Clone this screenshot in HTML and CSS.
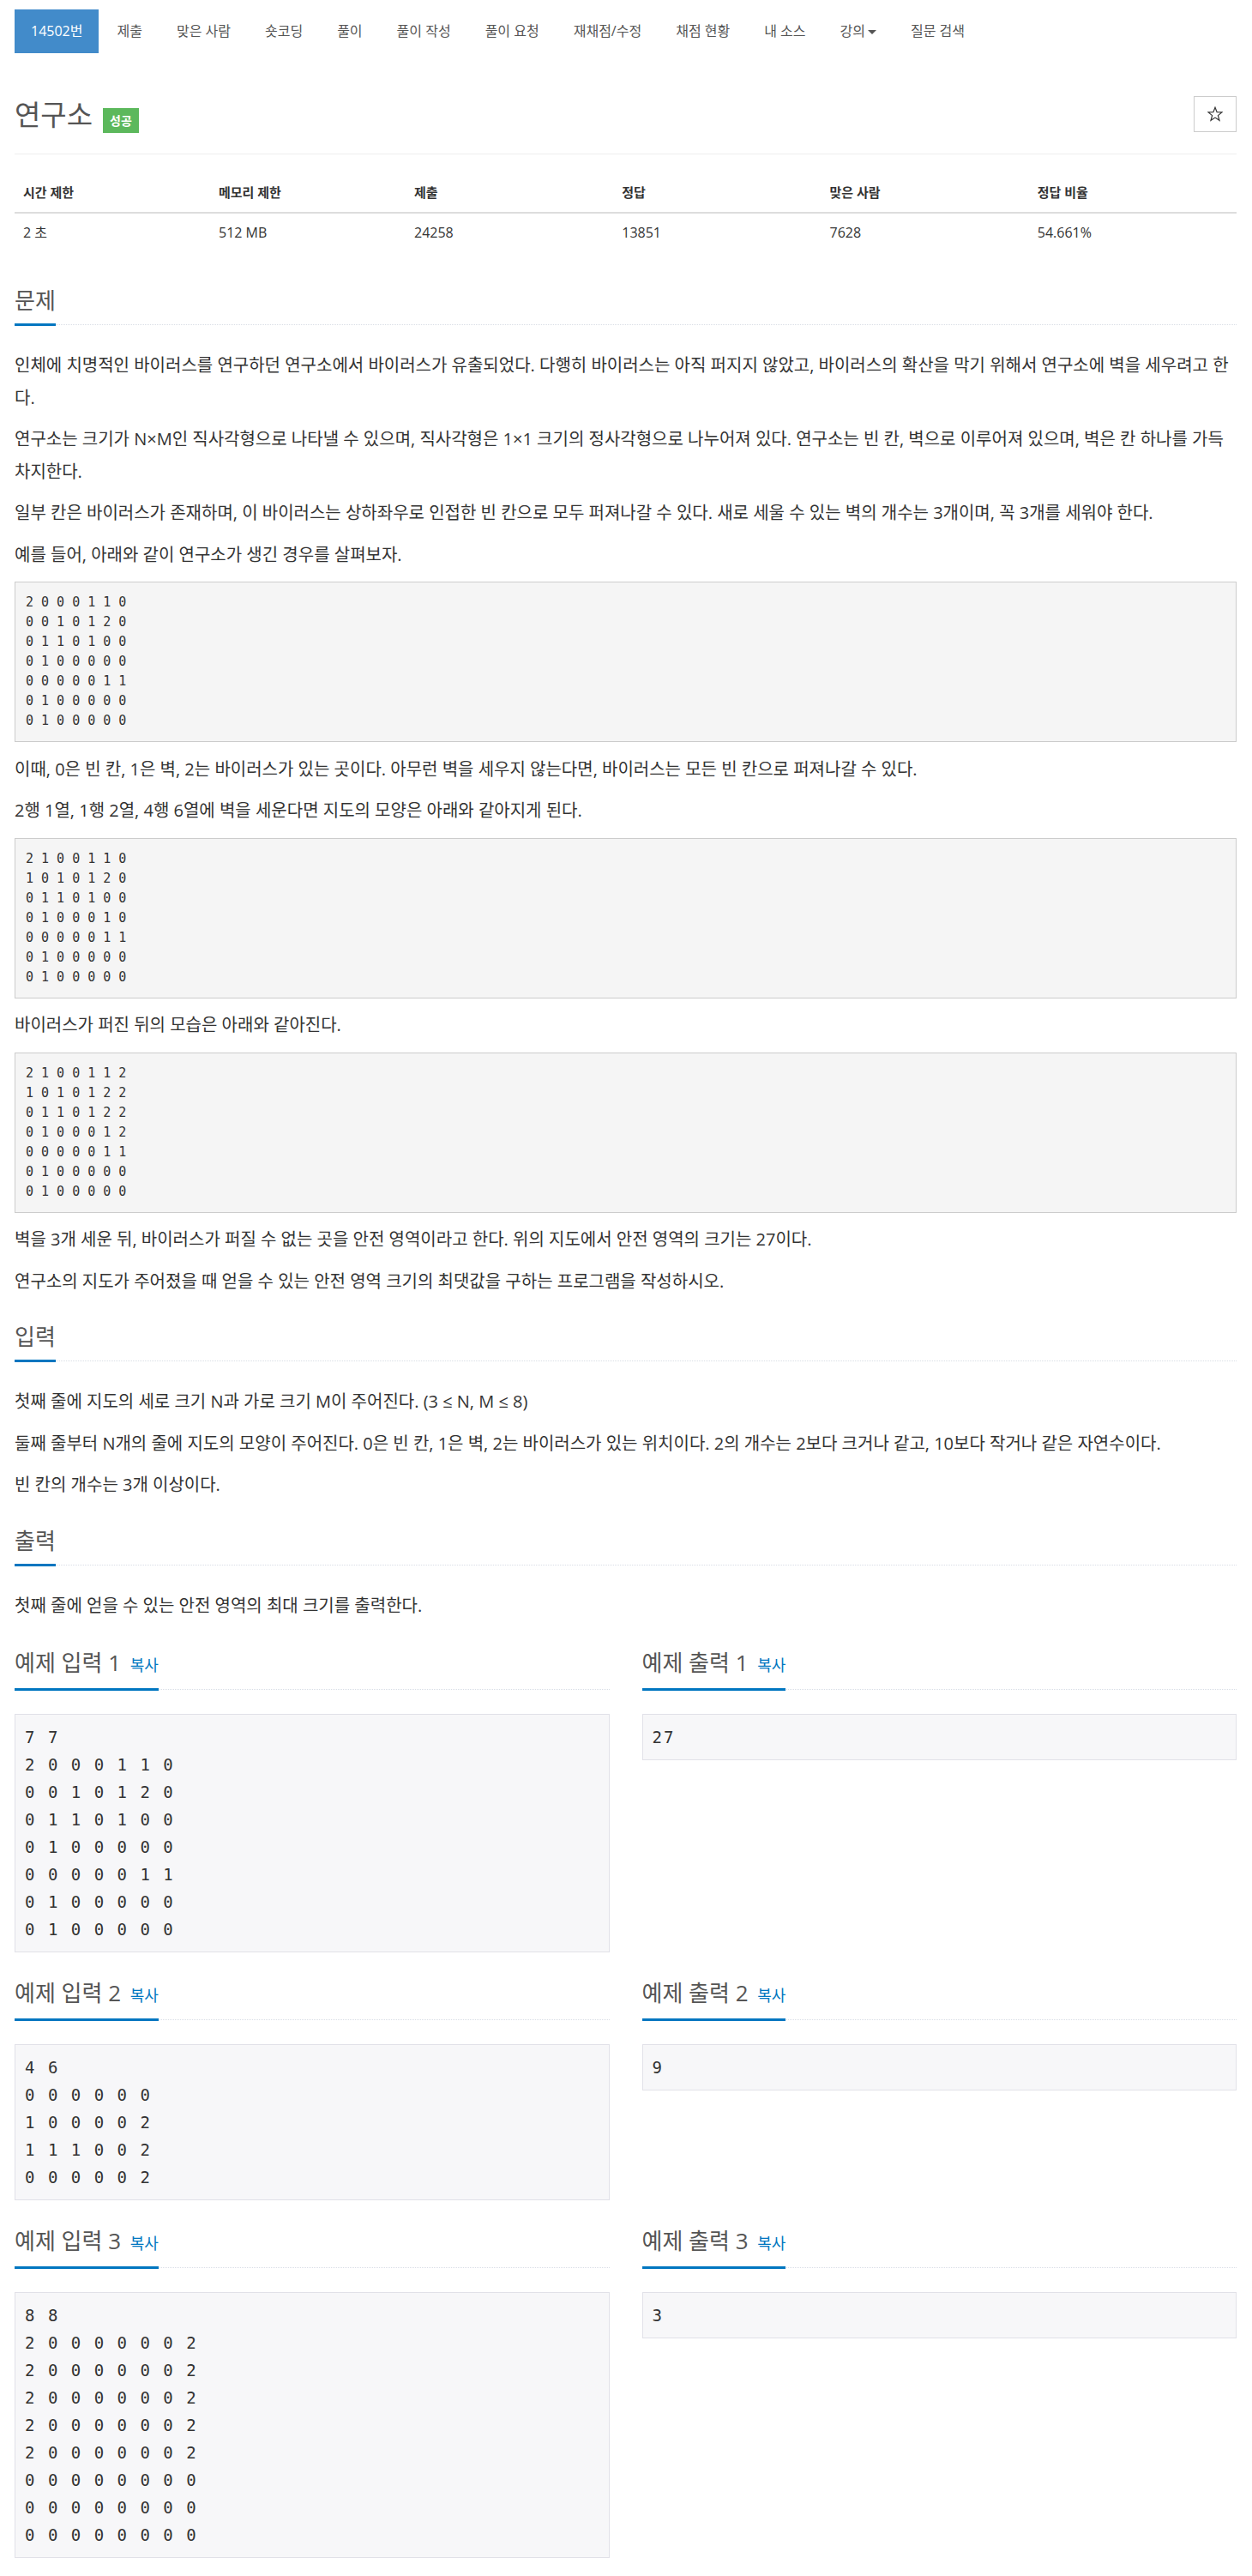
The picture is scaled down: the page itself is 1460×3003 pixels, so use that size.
FILE: index.html
```html
<!DOCTYPE html>
<html lang="ko">
<head>
<meta charset="utf-8">
<title>14502번: 연구소</title>
<link rel="stylesheet" href="styles.css">
</head>
<body>
<div class="container">
  <ul class="nav">
    <li class="active"><a>14502번</a></li>
    <li><a>제출</a></li>
    <li><a>맞은 사람</a></li>
    <li><a>숏코딩</a></li>
    <li><a>풀이</a></li>
    <li><a>풀이 작성</a></li>
    <li><a>풀이 요청</a></li>
    <li><a>재채점/수정</a></li>
    <li><a>채점 현황</a></li>
    <li><a>내 소스</a></li>
    <li><a>강의<span class="caret"></span></a></li>
    <li><a>질문 검색</a></li>
  </ul>

  <div class="page-header">
    <h1 class="title">연구소<span class="label">성공</span></h1>
    <button class="star-btn" type="button" aria-label="즐겨찾기">
      <svg width="18" height="18" viewBox="0 0 18 18"><polygon points="9,1.2 11.1,6.6 17,6.9 12.4,10.6 14,16.3 9,13.1 4,16.3 5.6,10.6 1,6.9 6.9,6.6" fill="none" stroke="#333" stroke-width="1.2" stroke-linejoin="miter"/></svg>
    </button>
  </div>

  <table class="info">
    <thead>
      <tr><th class="w16">시간 제한</th><th class="w16">메모리 제한</th><th class="w17">제출</th><th class="w17">정답</th><th class="w17">맞은 사람</th><th class="w17">정답 비율</th></tr>
    </thead>
    <tbody>
      <tr><td>2 초</td><td>512 MB</td><td>24258</td><td>13851</td><td>7628</td><td>54.661%</td></tr>
    </tbody>
  </table>

  <section class="section">
    <div class="headline"><h2>문제</h2></div>
    <div class="text">
      <p>인체에 치명적인 바이러스를 연구하던 연구소에서 바이러스가 유출되었다. 다행히 바이러스는 아직 퍼지지 않았고, 바이러스의 확산을 막기 위해서 연구소에 벽을 세우려고 한다.</p>
      <p>연구소는 크기가 N×M인 직사각형으로 나타낼 수 있으며, 직사각형은 1×1 크기의 정사각형으로 나누어져 있다. 연구소는 빈 칸, 벽으로 이루어져 있으며, 벽은 칸 하나를 가득<br>차지한다.</p>
      <p>일부 칸은 바이러스가 존재하며, 이 바이러스는 상하좌우로 인접한 빈 칸으로 모두 퍼져나갈 수 있다. 새로 세울 수 있는 벽의 개수는 3개이며, 꼭 3개를 세워야 한다.</p>
      <p>예를 들어, 아래와 같이 연구소가 생긴 경우를 살펴보자.</p>
<pre class="map">2 0 0 0 1 1 0
0 0 1 0 1 2 0
0 1 1 0 1 0 0
0 1 0 0 0 0 0
0 0 0 0 0 1 1
0 1 0 0 0 0 0
0 1 0 0 0 0 0</pre>
      <p>이때, 0은 빈 칸, 1은 벽, 2는 바이러스가 있는 곳이다. 아무런 벽을 세우지 않는다면, 바이러스는 모든 빈 칸으로 퍼져나갈 수 있다.</p>
      <p>2행 1열, 1행 2열, 4행 6열에 벽을 세운다면 지도의 모양은 아래와 같아지게 된다.</p>
<pre class="map">2 1 0 0 1 1 0
1 0 1 0 1 2 0
0 1 1 0 1 0 0
0 1 0 0 0 1 0
0 0 0 0 0 1 1
0 1 0 0 0 0 0
0 1 0 0 0 0 0</pre>
      <p>바이러스가 퍼진 뒤의 모습은 아래와 같아진다.</p>
<pre class="map">2 1 0 0 1 1 2
1 0 1 0 1 2 2
0 1 1 0 1 2 2
0 1 0 0 0 1 2
0 0 0 0 0 1 1
0 1 0 0 0 0 0
0 1 0 0 0 0 0</pre>
      <p>벽을 3개 세운 뒤, 바이러스가 퍼질 수 없는 곳을 안전 영역이라고 한다. 위의 지도에서 안전 영역의 크기는 27이다.</p>
      <p>연구소의 지도가 주어졌을 때 얻을 수 있는 안전 영역 크기의 최댓값을 구하는 프로그램을 작성하시오.</p>
    </div>
  </section>

  <section class="section">
    <div class="headline"><h2>입력</h2></div>
    <div class="text">
      <p>첫째 줄에 지도의 세로 크기 N과 가로 크기 M이 주어진다. (3 ≤ N, M ≤ 8)</p>
      <p>둘째 줄부터 N개의 줄에 지도의 모양이 주어진다. 0은 빈 칸, 1은 벽, 2는 바이러스가 있는 위치이다. 2의 개수는 2보다 크거나 같고, 10보다 작거나 같은 자연수이다.</p>
      <p>빈 칸의 개수는 3개 이상이다.</p>
    </div>
  </section>

  <section class="section">
    <div class="headline"><h2>출력</h2></div>
    <div class="text">
      <p>첫째 줄에 얻을 수 있는 안전 영역의 최대 크기를 출력한다.</p>
    </div>
  </section>

  <div class="samples">
    <section class="section">
      <div class="headline"><h2>예제 입력 1 <a class="copy">복사</a></h2></div>
<pre class="sample">7 7
2 0 0 0 1 1 0
0 0 1 0 1 2 0
0 1 1 0 1 0 0
0 1 0 0 0 0 0
0 0 0 0 0 1 1
0 1 0 0 0 0 0
0 1 0 0 0 0 0</pre>
    </section>
    <section class="section">
      <div class="headline"><h2>예제 출력 1 <a class="copy">복사</a></h2></div>
<pre class="sample">27</pre>
    </section>

    <section class="section">
      <div class="headline"><h2>예제 입력 2 <a class="copy">복사</a></h2></div>
<pre class="sample">4 6
0 0 0 0 0 0
1 0 0 0 0 2
1 1 1 0 0 2
0 0 0 0 0 2</pre>
    </section>
    <section class="section">
      <div class="headline"><h2>예제 출력 2 <a class="copy">복사</a></h2></div>
<pre class="sample">9</pre>
    </section>

    <section class="section">
      <div class="headline"><h2>예제 입력 3 <a class="copy">복사</a></h2></div>
<pre class="sample">8 8
2 0 0 0 0 0 0 2
2 0 0 0 0 0 0 2
2 0 0 0 0 0 0 2
2 0 0 0 0 0 0 2
2 0 0 0 0 0 0 2
0 0 0 0 0 0 0 0
0 0 0 0 0 0 0 0
0 0 0 0 0 0 0 0</pre>
    </section>
    <section class="section">
      <div class="headline"><h2>예제 출력 3 <a class="copy">복사</a></h2></div>
<pre class="sample">3</pre>
    </section>
  </div>
</div>
</body>
</html>
```
FILE: styles.css
```css
* { box-sizing: border-box; }

html, body {
  margin: 0;
  padding: 0;
  background: #fff;
}

body {
  font-family: "Open Sans", "Noto Sans CJK KR", sans-serif;
  color: #333;
  font-size: 16px;
}

.container {
  padding: 0 18px 0 17px;
}

/* nav pills */
.nav {
  list-style: none;
  margin: 11px 0 0 0;
  padding: 0;
  display: flex;
  flex-wrap: wrap;
}
.nav li + li { margin-left: 2px; }
.nav a {
  display: block;
  padding: 13px 19px;
  line-height: 25px;
  font-size: 16px;
  color: #555;
}
.nav li.active a {
  background: #428bca;
  color: #fff;
}
.caret {
  display: inline-block;
  width: 0;
  height: 0;
  margin-left: 3px;
  vertical-align: middle;
  border-top: 5px solid #555;
  border-left: 5px solid transparent;
  border-right: 5px solid transparent;
}

/* page header */
.page-header {
  margin-top: 50px;
  display: flex;
  justify-content: space-between;
  align-items: flex-start;
  padding-bottom: 23px;
  border-bottom: 1px solid #eee;
}
.title {
  margin: 0;
  font-size: 33px;
  font-weight: 400;
  line-height: 44px;
  color: #555;
}
.label {
  display: inline-block;
  margin-left: 12px;
  padding: 5px 8px;
  font-size: 14px;
  line-height: 19px;
  font-weight: 700;
  color: #fff;
  background: #5cb85c;
}
.star-btn {
  width: 50px;
  height: 42px;
  padding: 0;
  border: 1px solid #ccc;
  background: #fff;
  display: flex;
  align-items: center;
  justify-content: center;
}
.star-btn svg { display: block; }

/* info table */
.info {
  width: 100%;
  border-collapse: collapse;
  margin: 22px 0 21px;
}
.info th, .info td {
  text-align: left;
  padding: 10px;
  line-height: 25px;
}
.info th {
  font-size: 15px;
  font-weight: 700;
  border-bottom: 2px solid #ddd;
}
.info td {
  font-size: 16px;
  color: #333;
}
.w16 { width: 16%; }
.w17 { width: 17%; }

/* sections */
.section {
  display: flow-root;
}
.headline {
  margin: 17px 0 28px;
  border-bottom: 1px dotted #d9dee6;
}
.samples .headline {
  margin-top: 19px;
}
.headline h2 {
  display: inline-block;
  margin: 0 0 -2px;
  padding-bottom: 9px;
  font-size: 26px;
  font-weight: 400;
  line-height: 36px;
  color: #555;
  border-bottom: 3px solid #0076c0;
}
.copy {
  margin-left: 4px;
  font-size: 18px;
  color: #0076c0;
}

.text {
  margin-top: 5px;
}
.text p {
  margin: 0 0 11px;
  font-size: 20px;
  line-height: 37.5px;
}

pre {
  margin: 0;
}
.map {
  margin: 13px 0 12.5px;
  padding: 12px;
  font-family: "DejaVu Sans Mono", monospace;
  font-size: 15px;
  line-height: 23px;
  color: #333;
  background: #f5f5f5;
  border: 1px solid #ccc;
}

.samples {
  display: grid;
  grid-template-columns: 1fr 1fr;
  column-gap: 38px;
  align-items: start;
}
.sample {
  margin: 0 0 10px;
  padding: 10px 11px;
  font-family: "DejaVu Sans Mono", monospace;
  font-size: 19px;
  letter-spacing: 2px;
  line-height: 32px;
  color: #333;
  background: #f7f7f9;
  border: 1px solid #e1e1e8;
}
```
